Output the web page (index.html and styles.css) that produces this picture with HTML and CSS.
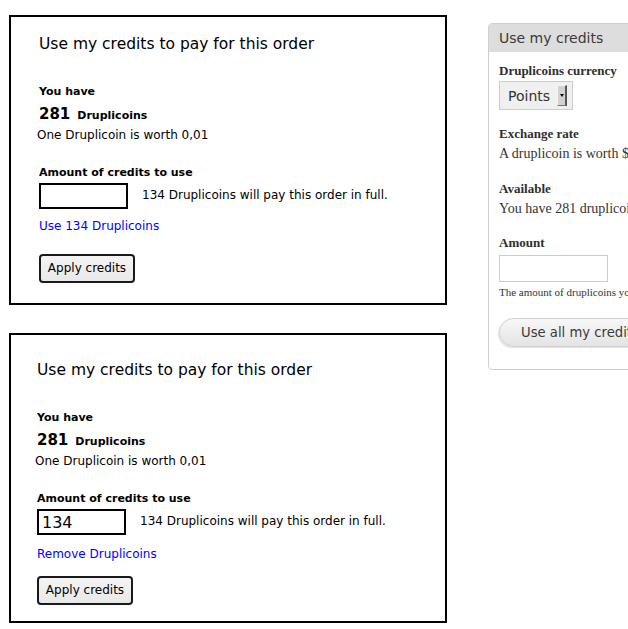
FILE: index.html
```html
<!DOCTYPE html>
<html lang="en">
<head>
<meta charset="utf-8">
<title>Use my credits</title>
<link rel="stylesheet" href="styles.css">
</head>
<body>
<div class="page">
  <div class="left">
    <div class="credit-box box-a">
      <h2 class="title">Use my credits to pay for this order</h2>
      <div class="label first">You have</div>
      <div class="balance"><span class="num">281</span><span class="unit">Druplicoins</span></div>
      <div class="worth">One Druplicoin is worth 0,01</div>
      <div class="label amount">Amount of credits to use</div>
      <div class="row">
        <input class="amount-input" type="text" value="">
        <span class="hint">134 Druplicoins will pay this order in full.</span>
      </div>
      <a class="link" href="#">Use 134 Druplicoins</a>
      <button class="apply" type="button">Apply credits</button>
    </div>
    <div class="credit-box box-b">
      <h2 class="title">Use my credits to pay for this order</h2>
      <div class="label first">You have</div>
      <div class="balance"><span class="num">281</span><span class="unit">Druplicoins</span></div>
      <div class="worth">One Druplicoin is worth 0,01</div>
      <div class="label amount">Amount of credits to use</div>
      <div class="row">
        <input class="amount-input" type="text" value="134">
        <span class="hint">134 Druplicoins will pay this order in full.</span>
      </div>
      <a class="link" href="#">Remove Druplicoins</a>
      <button class="apply" type="button">Apply credits</button>
    </div>
  </div>
  <aside class="panel">
    <div class="panel-head">Use my credits</div>
    <div class="panel-body">
      <div class="p-label">Druplicoins currency</div>
      <div class="select"><span class="select-text">Points</span><span class="select-arrow"></span></div>
      <div class="p-label gap">Exchange rate</div>
      <div class="p-text">A druplicoin is worth $0,01</div>
      <div class="p-label gap2">Available</div>
      <div class="p-text">You have 281 druplicoins</div>
      <div class="p-label gap3">Amount</div>
      <input class="p-input" type="text" value="">
      <div class="p-desc">The amount of druplicoins you want to use</div>
      <button class="p-button" type="button">Use all my credits</button>
    </div>
  </aside>
</div>
</body>
</html>
```

FILE: styles.css
```css
html, body {
  margin: 0;
  padding: 0;
  background: #fff;
}

.page {
  width: 628px;
  height: 629px;
  overflow: hidden;
  display: flex;
  align-items: flex-start;
  padding: 15px 0 0 9px;
  box-sizing: border-box;
}

.left {
  display: flex;
  flex-direction: column;
  gap: 28px;
  flex: none;
}

.credit-box {
  width: 438px;
  height: 290px;
  box-sizing: border-box;
  border: 2px solid #000;
  padding: 17px 20px 0 28px;
  font-family: "DejaVu Sans", sans-serif;
  color: #000;
  display: flex;
  flex-direction: column;
  align-items: flex-start;
}

.box-b {
  padding-top: 25px;
  padding-left: 26px;
}

.title {
  margin: 0;
  font-size: 15.5px;
  line-height: 20px;
  font-weight: normal;
}

.label {
  font-size: 11px;
  line-height: 14px;
  font-weight: bold;
}

.label.first {
  margin-top: 31px;
}

.balance {
  margin-top: 5px;
  line-height: 20px;
  font-weight: bold;
}

.num {
  font-size: 15px;
}

.unit {
  font-size: 11px;
  margin-left: 7px;
}

.worth {
  margin-top: 2px;
  margin-left: -2px;
  font-size: 12px;
  line-height: 15px;
}

.label.amount {
  margin-top: 23px;
}

.row {
  margin-top: 3px;
  display: flex;
  align-items: center;
  gap: 14px;
}

.amount-input {
  width: 89px;
  height: 26px;
  box-sizing: border-box;
  border: 2px solid #000;
  margin: 0;
  padding: 0 3px;
  font-family: "DejaVu Sans", sans-serif;
  font-size: 16px;
  color: #000;
  background: #fff;
  outline: none;
}

.hint {
  font-size: 12px;
  line-height: 15px;
  margin-bottom: 2px;
}

.link {
  margin-top: 10px;
  font-size: 12px;
  line-height: 15px;
  color: #0000ff;
  text-decoration: none;
}

.box-b .link {
  margin-top: 12px;
}

.apply {
  margin-top: 20px;
  width: 96px;
  height: 29px;
  box-sizing: border-box;
  border: 2px solid #1a1a1a;
  border-radius: 4px;
  background: linear-gradient(#f4f4f4, #e8e8e8);
  font-family: "DejaVu Sans", sans-serif;
  font-size: 12px;
  line-height: 15px;
  color: #000;
  padding: 0;
}

.box-b .apply {
  margin-top: 14px;
}

/* Right panel */
.panel {
  flex: none;
  margin-left: 41px;
  margin-top: 8px;
  width: 260px;
  border: 1px solid #cfcfcf;
  border-radius: 4px;
  overflow: hidden;
  color: #333;
}

.panel-head {
  background: #dddddd;
  height: 28px;
  box-sizing: border-box;
  padding: 5px 10px 0 10px;
  font-family: "DejaVu Sans", sans-serif;
  font-size: 14px;
  line-height: 18px;
  color: #3a3a3a;
}

.panel-body {
  padding: 11px 10px 22px 10px;
  display: flex;
  flex-direction: column;
  align-items: flex-start;
  font-family: "Liberation Serif", serif;
}

.p-label {
  font-size: 13px;
  line-height: 15px;
  font-weight: bold;
  color: #2e2e2e;
  white-space: nowrap;
}

.p-label.gap {
  margin-top: 16px;
}

.p-label.gap2 {
  margin-top: 19px;
}

.p-label.gap3 {
  margin-top: 18px;
}

.p-text {
  margin-top: 4px;
  font-size: 14px;
  line-height: 17px;
  color: #333;
  white-space: nowrap;
}

.select {
  margin-top: 3px;
  width: 74px;
  height: 29px;
  box-sizing: border-box;
  border: 1px solid #cccccc;
  background: #f0f0f0;
  display: flex;
  align-items: center;
  padding: 0 5px 0 8px;
  gap: 7px;
}

.select-text {
  font-family: "DejaVu Sans", sans-serif;
  font-size: 14px;
  line-height: 18px;
  color: #333;
}

.select-arrow {
  position: relative;
  width: 8px;
  height: 19px;
  background: #d2d2d2;
  border-top: 1px solid #f4f4f4;
  border-left: 1px solid #f4f4f4;
  border-right: 2px solid #555;
  border-bottom: 1px solid #777;
  box-sizing: content-box;
}

.select-arrow::after {
  content: "";
  position: absolute;
  left: 2px;
  top: 8px;
  border-left: 2px solid transparent;
  border-right: 2px solid transparent;
  border-top: 3px solid #000;
}

.p-input {
  margin-top: 5px;
  width: 109px;
  height: 27px;
  box-sizing: border-box;
  border: 1px solid #cccccc;
  background: #fff;
  padding: 0 4px;
  outline: none;
}

.p-desc {
  margin-top: 3px;
  font-size: 11px;
  line-height: 14px;
  color: #333;
  white-space: nowrap;
}

.p-button {
  margin-top: 19px;
  height: 29px;
  box-sizing: border-box;
  border: 1px solid #d0d0d0;
  border-radius: 15px;
  background: linear-gradient(#f8f8f8, #e4e4e4);
  box-shadow: -1px 1px 1px rgba(0, 0, 0, 0.12);
  padding: 0 21px;
  font-family: "DejaVu Sans", sans-serif;
  font-size: 13.2px;
  line-height: 18px;
  color: #3a3a3a;
  white-space: nowrap;
}
```
